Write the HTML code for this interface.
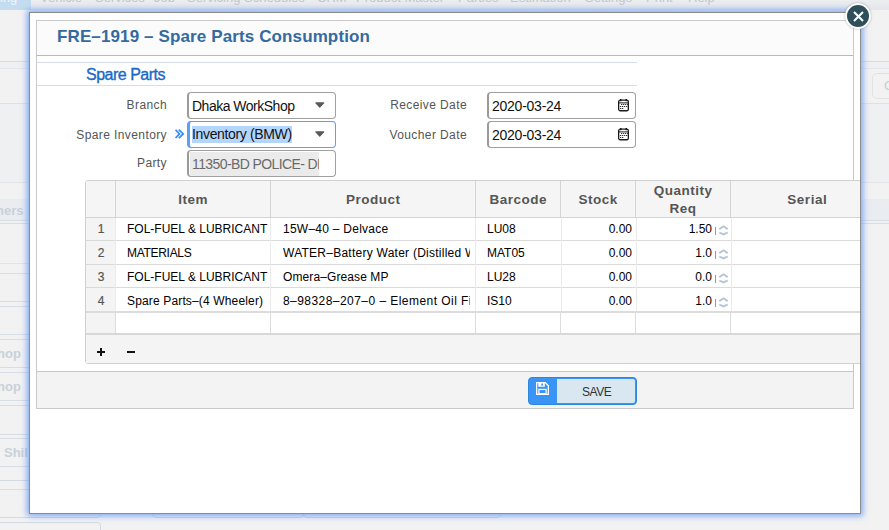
<!DOCTYPE html>
<html><head><meta charset="utf-8">
<style>
*{box-sizing:border-box;margin:0;padding:0}
html,body{width:889px;height:530px;overflow:hidden;background:#f0f0f0;font-family:"Liberation Sans",sans-serif;position:relative}
.a{position:absolute}
.topbar{left:0;top:0;width:889px;height:10px;background:linear-gradient(#eceef0,#e3e6ea);overflow:hidden}
.tab{left:0;top:0;width:31px;height:10px;background:#c4dcef}
.nav{top:-10px;font-size:13px;color:#c4c7ca;white-space:nowrap}
.bgl{height:1px;background:#dfe2e5}
.modal{left:29px;top:12px;width:832px;height:502px;background:#fff;border:1px solid #8c8c8c;box-shadow:0 0 6px 2px rgba(100,150,245,.8)}
.close{left:845px;top:3px;width:26px;height:26px;border-radius:50%;background:#2f4f5b;border:2px solid #fff;box-shadow:0 0 2px rgba(0,0,0,.35)}
.lab{font-size:12px;color:#555;text-align:right;white-space:nowrap;letter-spacing:.4px}
.inp{border:1px solid #a0a0a0;border-left:2px solid #9a9a9a;border-radius:4px;background:#fff;font-size:14px;letter-spacing:-.25px;color:#111;white-space:nowrap;overflow:hidden}
.th{font-size:13.5px;font-weight:bold;color:#555;letter-spacing:.5px;text-indent:.5px;text-align:center;white-space:nowrap}
.td{font-size:12px;color:#000;white-space:nowrap;overflow:hidden}
.vl{width:1px;background:#d6d6d6}
.hl{height:1px;background:#dadada}
</style></head><body>
<div class="a topbar">
  <div class="a tab"></div>
  <div class="a nav" style="left:0;color:#f4f6fa">ing</div>
  <div class="a nav" style="left:40px">Vehicle</div>
  <div class="a nav" style="left:95px">Services</div>
  <div class="a nav" style="left:154px">Job</div>
  <div class="a nav" style="left:187px">Servicing Schedules</div>
  <div class="a nav" style="left:317px">CRM</div>
  <div class="a nav" style="left:356px">Product Master</div>
  <div class="a nav" style="left:458px">Parties</div>
  <div class="a nav" style="left:510px">Estimation</div>
  <div class="a nav" style="left:585px">Settings</div>
  <div class="a nav" style="left:646px">Print</div>
  <div class="a nav" style="left:688px">Help</div>
</div>

<div class="a" style="left:0;top:10px;width:889px;height:520px;background:#f2f2f2"></div>
<div class="a bgl" style="left:0;top:61px;width:889px;background:#dcdcdc"></div>
<div class="a" style="left:0;top:62px;width:889px;height:6px;background:#eef0f2"></div>
<div class="a bgl" style="left:0;top:68px;width:889px;background:#e3e6e9"></div>
<div class="a bgl" style="left:0;top:103px;width:889px;background:#e0e0e0"></div>
<div class="a" style="left:0;top:104px;width:889px;height:78px;background:#eef0f1"></div>
<div class="a bgl" style="left:0;top:182px;width:889px;background:#e4e4e4"></div>
<div class="a" style="left:872px;top:73px;width:30px;height:26px;border:1px solid #e2e2e2;border-radius:5px"></div>
<div class="a" style="left:884px;top:78px;font-size:13px;color:#c3ccd6">C</div>
<div class="a" style="left:0;top:199px;width:889px;height:21px;background:#e9edf1"></div>
<div class="a" style="left:-4px;top:203px;font-size:13px;font-weight:bold;color:#c9d1d9">ners</div>
<div class="a bgl" style="left:0;top:220px;width:889px;background:#d6dde5"></div>
<div class="a bgl" style="left:0;top:223px;width:889px;background:#d6dde5"></div>
<div class="a bgl" style="left:0;top:263px;width:60px;background:#e3e3e3"></div>
<div class="a bgl" style="left:0;top:273px;width:60px;background:#d6dde5"></div>
<div class="a bgl" style="left:0;top:301px;width:60px;background:#d6dde5"></div>
<div class="a bgl" style="left:0;top:306px;width:60px;background:#d6dde5"></div>
<div class="a bgl" style="left:0;top:334px;width:60px;background:#d6dde5"></div>
<div class="a bgl" style="left:0;top:339px;width:60px;background:#d6dde5"></div>
<div class="a" style="left:-3px;top:346px;font-size:13px;font-weight:bold;color:#c9d1d9">hop</div>
<div class="a bgl" style="left:0;top:367px;width:60px;background:#d6dde5"></div>
<div class="a bgl" style="left:0;top:372px;width:60px;background:#d6dde5"></div>
<div class="a" style="left:-3px;top:379px;font-size:13px;font-weight:bold;color:#c9d1d9">hop</div>
<div class="a bgl" style="left:0;top:400px;width:60px;background:#d6dde5"></div>
<div class="a bgl" style="left:0;top:405px;width:60px;background:#d6dde5"></div>
<div class="a bgl" style="left:0;top:434px;width:60px;background:#d6dde5"></div>
<div class="a bgl" style="left:0;top:438px;width:60px;background:#d6dde5"></div>
<div class="a" style="left:4px;top:445px;font-size:13px;font-weight:bold;color:#c9d1d9">Shil</div>
<div class="a bgl" style="left:0;top:466px;width:60px;background:#d6dde5"></div>
<div class="a bgl" style="left:0;top:489px;width:60px;background:#d6dde5"></div>
<div class="a" style="left:-10px;top:480px;width:111px;height:38px;border:1px solid #d3d9e0;border-radius:4px"></div>
<div class="a" style="left:-10px;top:522px;width:111px;height:30px;border:1px solid #d3d9e0;border-radius:4px"></div>
<div class="a" style="left:152px;top:490px;width:152px;height:28px;border:1px solid #d3d9e0;border-radius:4px"></div>
<div class="a" style="left:303px;top:490px;width:198px;height:28px;border:1px solid #d3d9e0;border-radius:4px"></div>

<div class="a modal"></div>
<div class="a" style="left:0;top:0;width:860px;height:513px;overflow:hidden">
  <div class="a" style="left:36px;top:20px;width:818px;height:389px;border:1px solid #c9c9c9;background:#fff"></div>
  <div class="a" style="left:37px;top:21px;width:816px;height:35px;background:#fbfbfb;border-bottom:1px solid #b9b9b9"></div>
  <div class="a m" style="left:57px;top:27px;font-size:17px;font-weight:bold;color:#356a9e;white-space:nowrap;letter-spacing:.12px">FRE&ndash;1919 &ndash; Spare Parts Consumption</div>
  <div class="a" style="left:37px;top:62px;width:600px;height:1px;background:#d8dcef"></div>
  <div class="a" style="left:37px;top:85px;width:600px;height:1px;background:#d8dcef"></div>
  <div class="a m" style="left:86px;top:66px;font-size:16px;color:#1a69c6;white-space:nowrap;letter-spacing:-.5px;-webkit-text-stroke:.35px #1a69c6">Spare Parts</div>

  <div class="a lab m" style="right:693px;top:98px">Branch</div>
  <div class="a lab m" style="right:693px;top:128px">Spare Inventory</div>
  <div class="a lab m" style="right:693px;top:156px">Party</div>
  <div class="a lab m" style="right:393px;top:98px">Receive Date</div>
  <div class="a lab m" style="right:393px;top:128px">Voucher Date</div>
  <svg class="a" style="left:174px;top:128px" width="12" height="12" viewBox="0 0 12 12"><path d="M1.6 1.8L5.4 5.9L1.6 10M4.8 1.6L9.2 5.9L4.8 10.2" fill="none" stroke="#3a8ef5" stroke-width="1.8"/></svg>

  <div class="a inp" style="left:187px;top:92px;width:149px;height:27px"><span class="a m" style="left:3px;top:5px;letter-spacing:-.5px">Dhaka WorkShop</span><svg class="a" style="left:126px;top:9px" width="10" height="6"><path d="M.8 .9H8.7L4.75 5.2Z" fill="#595959" stroke="#595959" stroke-width="1.1" stroke-linejoin="round"/></svg></div>
  <div class="a inp" style="left:187px;top:121px;width:149px;height:27px;border-color:#5e9ff2;border-left:3px solid #5e9ff2"><span class="a m" style="left:2px;top:4px;background:#b4d6fd;line-height:17px;letter-spacing:-.35px">Inventory (BMW)</span><svg class="a" style="left:125px;top:9px" width="10" height="6"><path d="M.8 .9H8.7L4.75 5.2Z" fill="#595959" stroke="#595959" stroke-width="1.1" stroke-linejoin="round"/></svg></div>
  <div class="a inp" style="left:187px;top:150px;width:149px;height:27px"><div class="a" style="left:1px;top:1px;width:129px;height:24px;background:#ebebeb;overflow:hidden"><span class="a m" style="left:2px;top:4px;color:#6a6a6a;letter-spacing:-.6px">11350-BD POLICE- DI</span></div></div>

  <div class="a inp" style="left:487px;top:92px;width:149px;height:27px"><span class="a m" style="left:3px;top:5px">2020-03-24</span><svg class="a" style="left:128px;top:5px" width="13" height="14" viewBox="0 0 13 14"><rect x="1.65" y="2.15" width="9.7" height="10.6" rx="1.6" fill="none" stroke="#1a1a1a" stroke-width="1.3"/><path d="M1.7 4.9H11.3" stroke="#1a1a1a" stroke-width="1"/><rect x="3" y="1" width="1.5" height="2.2" fill="#1a1a1a"/><rect x="8.5" y="1" width="1.5" height="2.2" fill="#1a1a1a"/><g fill="#333"><rect x="4" y="6" width="1.3" height="1"/><rect x="6" y="6" width="1.3" height="1"/><rect x="8" y="6" width="1.3" height="1"/><rect x="10" y="6" width="1.3" height="1"/><rect x="3" y="8" width="1.3" height="1"/><rect x="5" y="8" width="1.3" height="1"/><rect x="7" y="8" width="1.3" height="1"/><rect x="9" y="8" width="1.3" height="1"/><rect x="3" y="10" width="1.3" height="1"/><rect x="5" y="10" width="1.3" height="1"/></g></svg></div>
  <div class="a inp" style="left:487px;top:121px;width:149px;height:27px"><span class="a m" style="left:3px;top:5px">2020-03-24</span><svg class="a" style="left:128px;top:5px" width="13" height="14" viewBox="0 0 13 14"><rect x="1.65" y="2.15" width="9.7" height="10.6" rx="1.6" fill="none" stroke="#1a1a1a" stroke-width="1.3"/><path d="M1.7 4.9H11.3" stroke="#1a1a1a" stroke-width="1"/><rect x="3" y="1" width="1.5" height="2.2" fill="#1a1a1a"/><rect x="8.5" y="1" width="1.5" height="2.2" fill="#1a1a1a"/><g fill="#333"><rect x="4" y="6" width="1.3" height="1"/><rect x="6" y="6" width="1.3" height="1"/><rect x="8" y="6" width="1.3" height="1"/><rect x="10" y="6" width="1.3" height="1"/><rect x="3" y="8" width="1.3" height="1"/><rect x="5" y="8" width="1.3" height="1"/><rect x="7" y="8" width="1.3" height="1"/><rect x="9" y="8" width="1.3" height="1"/><rect x="3" y="10" width="1.3" height="1"/><rect x="5" y="10" width="1.3" height="1"/></g></svg></div>

  <div class="a" style="left:85px;top:180px;width:800px;height:184px;border:1px solid #d0d0d0;border-radius:3px;background:#fff"></div>
  <div class="a" style="left:86px;top:181px;width:800px;height:36px;background:#f5f5f5;border-radius:2px 0 0 0"></div>
  <div class="a" style="left:86px;top:217px;width:30px;height:118px;background:#f4f4f4"></div>
  <div class="a" style="left:86px;top:335px;width:800px;height:28px;background:#f4f4f4"></div>
  <div class="a hl" style="left:86px;top:217px;width:800px;background:#d4d4d4"></div>
  <div class="a hl" style="left:86px;top:240px;width:800px"></div>
  <div class="a hl" style="left:86px;top:264px;width:800px"></div>
  <div class="a hl" style="left:86px;top:287px;width:800px"></div>
  <div class="a hl" style="left:86px;top:311px;width:800px;height:2px;background:#dcdcdc"></div>
  <div class="a hl" style="left:86px;top:333px;width:800px;height:2px;background:#d8d8d8"></div>
  <div class="a vl" style="left:115px;top:181px;height:36px;background:#d4d4d4"></div>
  <div class="a vl" style="left:270px;top:181px;height:36px;background:#d4d4d4"></div>
  <div class="a vl" style="left:475px;top:181px;height:36px;background:#d4d4d4"></div>
  <div class="a vl" style="left:560px;top:181px;height:36px;background:#d4d4d4"></div>
  <div class="a vl" style="left:635px;top:181px;height:36px;background:#d4d4d4"></div>
  <div class="a vl" style="left:730px;top:181px;height:36px;background:#d4d4d4"></div>
  <div class="a vl" style="left:115px;top:218px;height:93px;background:#ebebeb"></div>
  <div class="a vl" style="left:270px;top:218px;height:93px;background:#ebebeb"></div>
  <div class="a vl" style="left:475px;top:218px;height:93px;background:#ebebeb"></div>
  <div class="a vl" style="left:561px;top:218px;height:93px;background:#ebebeb"></div>
  <div class="a vl" style="left:636px;top:218px;height:93px;background:#ebebeb"></div>
  <div class="a vl" style="left:731px;top:218px;height:93px;background:#ebebeb"></div>
  <div class="a vl" style="left:115px;top:313px;height:20px;background:#dcdcdc"></div>
  <div class="a vl" style="left:270px;top:313px;height:20px;background:#dcdcdc"></div>
  <div class="a vl" style="left:475px;top:313px;height:20px;background:#dcdcdc"></div>
  <div class="a vl" style="left:560px;top:313px;height:20px;background:#dcdcdc"></div>
  <div class="a vl" style="left:635px;top:313px;height:20px;background:#dcdcdc"></div>
  <div class="a vl" style="left:730px;top:313px;height:20px;background:#dcdcdc"></div>

  <div class="a th m" style="left:116px;width:154px;top:192px">Item</div>
  <div class="a th m" style="left:271px;width:204px;top:192px">Product</div>
  <div class="a th m" style="left:476px;width:84px;top:192px">Barcode</div>
  <div class="a th m" style="left:561px;width:74px;top:192px">Stock</div>
  <div class="a th m" style="left:636px;width:94px;top:182px;line-height:17.5px">Quantity<br>Req</div>
  <div class="a th m" style="left:731px;width:152px;top:192px">Serial</div>

  <div class="a td m" style="left:86px;width:30px;top:222px;text-align:center;color:#555;-webkit-text-stroke:.2px #555">1</div>
  <div class="a td m" style="left:127px;width:142px;top:222px;letter-spacing:0">FOL-FUEL &amp; LUBRICANT</div>
  <div class="a td m" style="left:283px;width:187px;top:222px;letter-spacing:.25px">15W&ndash;40 &ndash; Delvace</div>
  <div class="a td m" style="left:487px;width:72px;top:222px">LU08</div>
  <div class="a td m" style="left:561px;width:71px;top:222px;text-align:right">0.00</div>
  <div class="a td m" style="left:636px;width:76px;top:222px;text-align:right">1.50</div>
  <svg class="a" style="left:714px;top:223px" width="16" height="13" viewBox="0 0 16 13"><rect x="1" y="4" width="1" height="8" fill="#9a9a9a"/><path d="M5.3 6.1L9.5 3.3L13.7 6.1" fill="none" stroke="#b5c5d5" stroke-width="1.9"/><path d="M5.3 9.5L9.5 11.4L13.7 9.5" fill="none" stroke="#b5c5d5" stroke-width="1.9"/></svg>
  <div class="a td m" style="left:86px;width:30px;top:246px;text-align:center;color:#555;-webkit-text-stroke:.2px #555">2</div>
  <div class="a td m" style="left:127px;width:142px;top:246px;letter-spacing:-.3px">MATERIALS</div>
  <div class="a td m" style="left:283px;width:187px;top:246px;letter-spacing:.25px">WATER&ndash;Battery Water (Distilled Water)</div>
  <div class="a td m" style="left:487px;width:72px;top:246px">MAT05</div>
  <div class="a td m" style="left:561px;width:71px;top:246px;text-align:right">0.00</div>
  <div class="a td m" style="left:636px;width:76px;top:246px;text-align:right">1.0</div>
  <svg class="a" style="left:714px;top:247px" width="16" height="13" viewBox="0 0 16 13"><rect x="1" y="4" width="1" height="8" fill="#9a9a9a"/><path d="M5.3 6.1L9.5 3.3L13.7 6.1" fill="none" stroke="#b5c5d5" stroke-width="1.9"/><path d="M5.3 9.5L9.5 11.4L13.7 9.5" fill="none" stroke="#b5c5d5" stroke-width="1.9"/></svg>
  <div class="a td m" style="left:86px;width:30px;top:270px;text-align:center;color:#555;-webkit-text-stroke:.2px #555">3</div>
  <div class="a td m" style="left:127px;width:142px;top:270px;letter-spacing:0">FOL-FUEL &amp; LUBRICANT</div>
  <div class="a td m" style="left:283px;width:187px;top:270px;letter-spacing:.1px">Omera&ndash;Grease MP</div>
  <div class="a td m" style="left:487px;width:72px;top:270px">LU28</div>
  <div class="a td m" style="left:561px;width:71px;top:270px;text-align:right">0.00</div>
  <div class="a td m" style="left:636px;width:76px;top:270px;text-align:right">0.0</div>
  <svg class="a" style="left:714px;top:271px" width="16" height="13" viewBox="0 0 16 13"><rect x="1" y="4" width="1" height="8" fill="#9a9a9a"/><path d="M5.3 6.1L9.5 3.3L13.7 6.1" fill="none" stroke="#b5c5d5" stroke-width="1.9"/><path d="M5.3 9.5L9.5 11.4L13.7 9.5" fill="none" stroke="#b5c5d5" stroke-width="1.9"/></svg>
  <div class="a td m" style="left:86px;width:30px;top:294px;text-align:center;color:#555;-webkit-text-stroke:.2px #555">4</div>
  <div class="a td m" style="left:127px;width:142px;top:294px;letter-spacing:.15px">Spare Parts&ndash;(4 Wheeler)</div>
  <div class="a td m" style="left:283px;width:187px;top:294px;letter-spacing:.45px">8&ndash;98328&ndash;207&ndash;0 &ndash; Element Oil Filter</div>
  <div class="a td m" style="left:487px;width:72px;top:294px">IS10</div>
  <div class="a td m" style="left:561px;width:71px;top:294px;text-align:right">0.00</div>
  <div class="a td m" style="left:636px;width:76px;top:294px;text-align:right">1.0</div>
  <svg class="a" style="left:714px;top:295px" width="16" height="13" viewBox="0 0 16 13"><rect x="1" y="4" width="1" height="8" fill="#9a9a9a"/><path d="M5.3 6.1L9.5 3.3L13.7 6.1" fill="none" stroke="#b5c5d5" stroke-width="1.9"/><path d="M5.3 9.5L9.5 11.4L13.7 9.5" fill="none" stroke="#b5c5d5" stroke-width="1.9"/></svg>

  <div class="a" style="left:97px;top:351px;width:8px;height:2px;background:#111"></div>
  <div class="a" style="left:100px;top:348px;width:2px;height:8px;background:#111"></div>
  <div class="a" style="left:127px;top:351px;width:8px;height:2px;background:#111"></div>

  <div class="a" style="left:37px;top:371px;width:816px;height:37px;background:#f3f3f3;border-top:1px solid #c6c6c6"></div>
  <div class="a" style="left:528px;top:377px;width:109px;height:28px;border:1px solid #2c88dc;border-radius:4px;background:#3a94f5;overflow:hidden">
    <div class="a" style="left:28px;top:1px;width:78px;height:24px;background:#d9e7f1;border-radius:0 2px 2px 0"></div>
    <svg class="a" style="left:7px;top:4px" width="13" height="13" viewBox="0 0 14 14"><path d="M0.7 0.7H10L13.3 4V13.3H0.7Z" fill="none" stroke="#fff" stroke-width="1.4"/><path d="M2.5 1H9.5V5H2.5Z" fill="#fff"/><rect x="5.7" y="1.6" width="1.8" height="2.4" fill="#3a94f5"/><rect x="3.1" y="8" width="7.8" height="4.6" fill="none" stroke="#fff" stroke-width="1.3"/></svg>
    <span class="a m" style="left:53px;top:7px;font-size:12px;color:#333;letter-spacing:-.45px">SAVE</span>
  </div>
</div>
<div class="a close"><svg class="a" style="left:5.5px;top:5.5px" width="11" height="11" viewBox="0 0 11 11"><path d="M1 1L10 10M10 1L1 10" stroke="#fff" stroke-width="2.1"/></svg></div>
</body></html>
